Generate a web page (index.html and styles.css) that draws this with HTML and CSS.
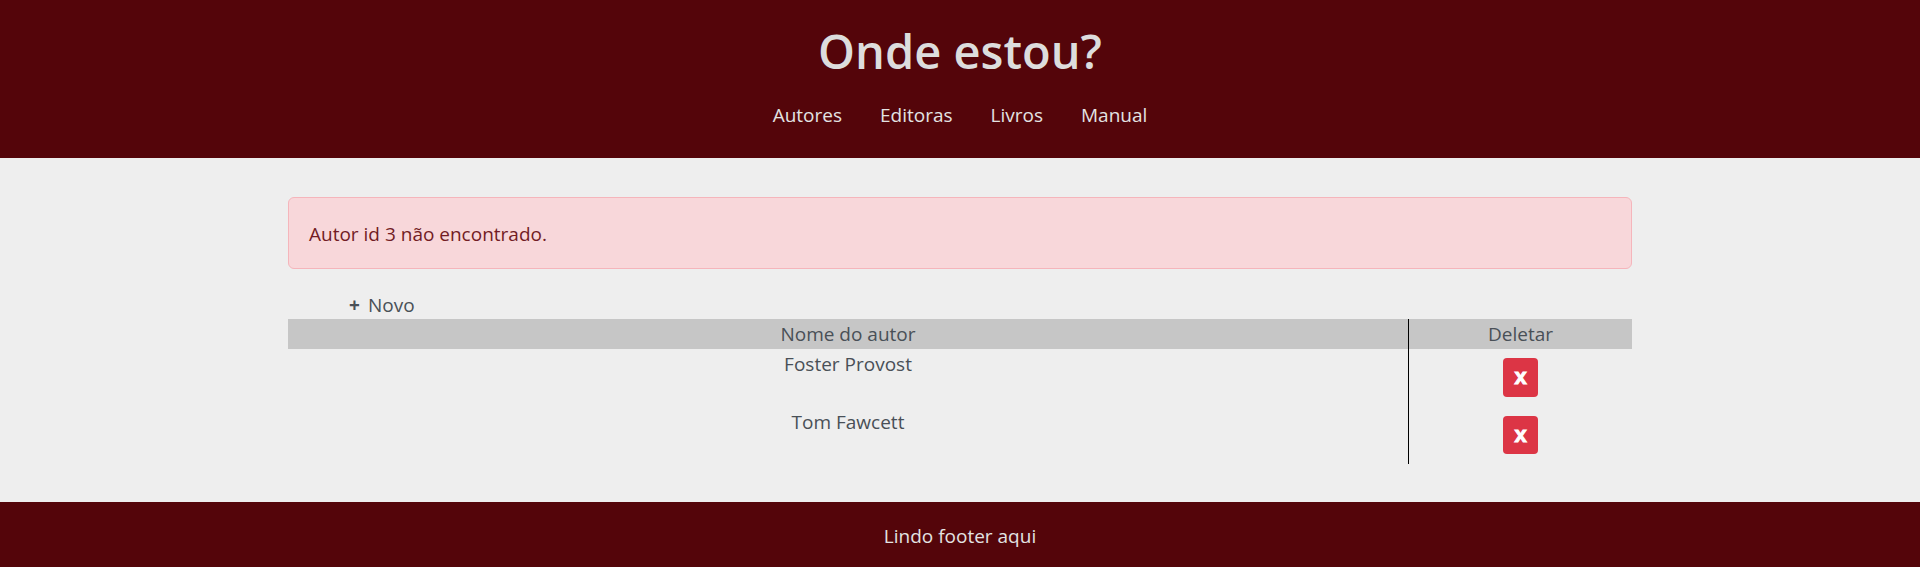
FILE: index.html
```html
<!DOCTYPE html>
<html lang="pt-BR">
<head>
    <meta charset="UTF-8">
    <meta name="viewport" content="width=device-width, initial-scale=1.0">
    <title>Onde estou?</title>
    <link rel="stylesheet" href="styles.css">
</head>
<body>
    <header class="topo">
        <h1>Onde estou?</h1>
        <nav class="menu">
            <a href="#">Autores</a>
            <a href="#">Editoras</a>
            <a href="#">Livros</a>
            <a href="#">Manual</a>
        </nav>
    </header>

    <main class="container">
        <div class="alerta">Autor id 3 não encontrado.</div>

        <a class="novo" href="#"><span class="mais">+</span>Novo</a>

        <div class="tabela">
            <div class="linha cabecalho">
                <div class="col-nome">Nome do autor</div>
                <div class="col-deletar">Deletar</div>
            </div>
            <div class="linha">
                <div class="col-nome">Foster Provost</div>
                <div class="col-deletar"><button class="btn-x" type="button">x</button></div>
            </div>
            <div class="linha">
                <div class="col-nome">Tom Fawcett</div>
                <div class="col-deletar"><button class="btn-x" type="button">x</button></div>
            </div>
        </div>
    </main>

    <footer class="rodape">Lindo footer aqui</footer>
</body>
</html>
```

FILE: styles.css
```css
* {
    box-sizing: border-box;
}
body {
    font-family: "Open Sans", Arial, sans-serif;
    font-size: 19px;
    line-height: 1.5;
    background-color: #eee;
    margin: 0;
    padding: 0;
    color: #495057;
}
.topo {
    background-color: #54050a;
    height: 158px;
    padding-top: 19px;
    text-align: center;
}
.topo h1 {
    margin: 0;
    font-size: 47px;
    line-height: 64px;
    font-weight: 600;
    color: #ddd;
}
.menu {
    display: flex;
    justify-content: center;
    gap: 38px;
    margin-top: 18px;
}
.menu a {
    color: #e3e3e3;
    text-decoration: none;
}
.container {
    width: 1344px;
    margin: 0 auto;
    padding-top: 39px;
    height: 344px;
}
.alerta {
    height: 72px;
    padding: 17px 20px;
    line-height: 38px;
    background-color: #f8d7da;
    border: 1px solid #f5b5bb;
    border-radius: 6px;
    color: #721c24;
}
.novo {
    display: block;
    height: 24px;
    margin-top: 26px;
    padding-left: 61px;
    line-height: 21px;
    color: #495057;
    text-decoration: none;
}
.mais {
    display: inline-block;
    width: 19px;
    font-weight: bold;
}
.linha {
    display: flex;
    text-align: center;
}
.linha + .linha {
    height: 57.5px;
    line-height: 31px;
}
.cabecalho {
    height: 30px;
    line-height: 31px;
    background-color: #c6c6c6;
}
.col-nome {
    width: 1120px;
}
.col-deletar {
    width: 224px;
    border-left: 1px solid #000;
}
.btn-x {
    display: block;
    width: 35px;
    height: 38.5px;
    margin: 9px auto 0;
    padding: 0;
    border: none;
    border-radius: 4px;
    background-color: #dc3545;
    color: #fff;
    font-family: "Liberation Sans", sans-serif;
    font-size: 22px;
    font-weight: bold;
    -webkit-text-stroke: 1px #fff;
    line-height: 32px;
}
.rodape {
    height: 65px;
    line-height: 69px;
    background-color: #54050a;
    color: #e3e3e3;
    text-align: center;
}
```
